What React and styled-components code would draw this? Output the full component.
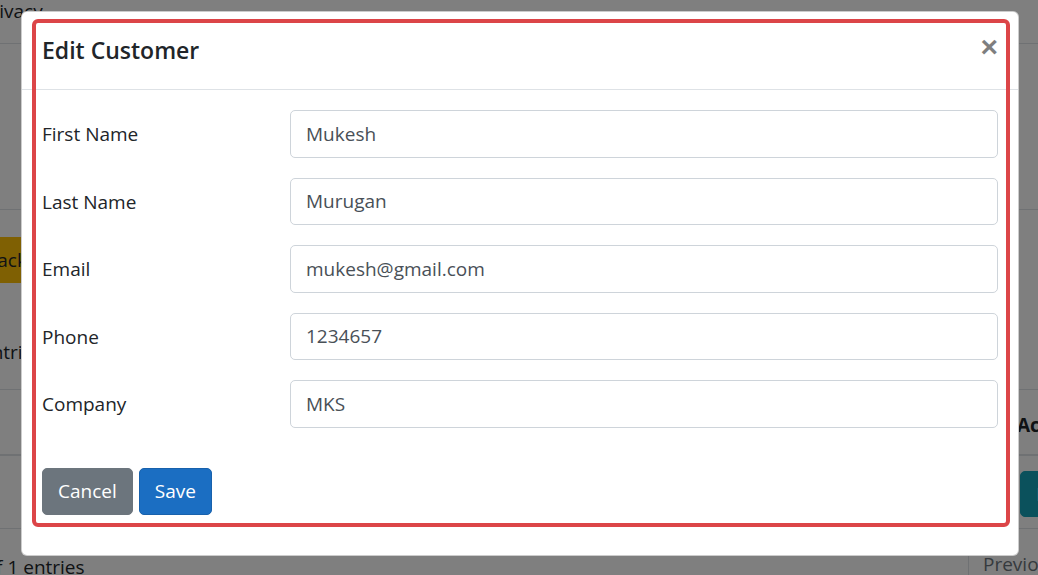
import React from "react";
import styled, { createGlobalStyle } from "styled-components";

const GlobalStyle = createGlobalStyle`
  html, body {
    margin: 0;
    padding: 0;
  }
  body {
    font-family: "Open Sans", "Noto Sans", "Liberation Sans", sans-serif;
    color: #212529;
  }
`;

const Page = styled.div`
  position: relative;
  width: 1038px;
  height: 575px;
  overflow: hidden;
  background: #fff;
  font-size: 19px;
  line-height: 30px;
`;

/* page behind the dialog */

const Behind = styled.div`
  display: flex;
  flex-direction: column;
  width: 1200px;
`;

const NavBar = styled.div`
  height: 43px;
  border-bottom: 1px solid #dee2e6;
  display: flex;
  align-items: flex-start;
`;

const NavLink = styled.span`
  margin-left: -20px;
  margin-top: -4px;
  color: #212529;
`;

const Hero = styled.div`
  height: 165px;
  border-bottom: 1px solid #dee2e6;
`;

const Toolbar = styled.div`
  padding-top: 27px;
  height: 73px;
`;

const WarningButton = styled.span`
  display: inline-block;
  margin-left: -31px;
  padding: 7px 15px;
  background: #ffc107;
  border: 1px solid #ffc107;
  border-radius: 5px;
  color: #212529;
`;

const LengthRow = styled.div`
  height: 79px;
  display: flex;
  align-items: center;
  padding-top: 4px;
  box-sizing: border-box;
`;

const Cropped = styled.span`
  margin-left: ${(p) => p.$shift}px;
  white-space: nowrap;
`;

const TableRow = styled.div`
  display: grid;
  grid-template-columns: 1005px 195px;
  height: ${(p) => p.$h}px;
  border-top: ${(p) => p.$top}px solid #dee2e6;
  align-items: center;
`;

const HeadCell = styled.div`
  font-weight: 700;
  padding: 0 12px;
  padding-top: 6px;
`;

const Cell = styled.div`
  padding: 4px 15px 0;
`;

const InfoButton = styled.span`
  display: inline-block;
  padding: 7px 15px;
  background: #17a2b8;
  border: 1px solid #17a2b8;
  border-radius: 5px;
  color: #fff;
`;

const FooterRow = styled.div`
  border-top: 1px solid #dee2e6;
  display: flex;
  justify-content: space-between;
  height: 60px;
`;

const Info = styled.div`
  padding-top: 23px;
`;

const Pager = styled.div`
  width: 217px;
  border-left: 1px solid #dee2e6;
  padding: 20px 0 0 14px;
  color: #6c757d;
`;

const Backdrop = styled.div`
  position: absolute;
  inset: 0;
  background: rgba(0, 0, 0, 0.5);
`;

/* dialog */

const ModalLayer = styled.div`
  position: absolute;
  inset: 0;
  display: flex;
  justify-content: flex-start;
  align-items: flex-start;
  padding: 11px 0 0 21px;
`;

const ModalContent = styled.div`
  width: 998px;
  box-sizing: border-box;
  background: #fff;
  border: 1px solid rgba(0, 0, 0, 0.2);
  border-radius: 6px;
  display: flex;
  flex-direction: column;
`;

const ModalHeader = styled.div`
  display: flex;
  align-items: flex-start;
  justify-content: space-between;
  padding: 20px;
  border-bottom: 1px solid #dee2e6;
`;

const Title = styled.h5`
  margin: 0;
  font-size: 23px;
  line-height: 37px;
  font-weight: 600;
  color: #212529;
`;

const CloseButton = styled.button`
  margin: -20px -20px -20px auto;
  padding: 20px;
  background: transparent;
  border: 0;
  font-family: "Liberation Sans", Arial, sans-serif;
  font-size: 30px;
  font-weight: 700;
  line-height: 1;
  color: #000;
  opacity: 0.5;
  cursor: pointer;
`;

const ModalBody = styled.form`
  padding: 20px 20px 40px;
  display: flex;
  flex-direction: column;
  gap: 20px;
`;

const FormRow = styled.div`
  display: flex;
  align-items: flex-start;
`;

const Label = styled.label`
  width: 248px;
  flex-shrink: 0;
  padding-top: 9px;
  line-height: 30px;
  color: #212529;
`;

const Input = styled.input`
  flex: 1;
  height: 47.5px;
  box-sizing: border-box;
  padding: 7px 15px;
  font-family: inherit;
  font-size: 19px;
  line-height: 30px;
  color: #495057;
  background: #fff;
  border: 1px solid #ced4da;
  border-radius: 5px;
  outline: none;
`;

const Actions = styled.div`
  display: flex;
  gap: 6px;
  margin-top: 20px;
`;

const Button = styled.button`
  height: 47.5px;
  padding: 7px 15px;
  font-family: inherit;
  font-size: 19px;
  line-height: 30px;
  color: #fff;
  border-radius: 5px;
  border: 1px solid ${(p) => (p.$primary ? "#1861ac" : "#6c757d")};
  background: ${(p) => (p.$primary ? "#1b6ec2" : "#6c757d")};
  cursor: pointer;
`;

const Highlight = styled.div`
  position: absolute;
  left: 32px;
  top: 19px;
  width: 978px;
  height: 508px;
  box-sizing: border-box;
  border: 4px solid #dc4548;
  border-radius: 6px;
  pointer-events: none;
`;

const fields = [
    {id: "firstName", label: "First Name", value: "Mukesh"},
    {id: "lastName", label: "Last Name", value: "Murugan"},
    {id: "email", label: "Email", value: "mukesh@gmail.com"},
    {id: "phone", label: "Phone", value: "1234657"},
    {id: "company", label: "Company", value: "MKS"},
];

const App = () => {
    return (
        <>
            <GlobalStyle/>
            <Page>
                <Behind>
                    <NavBar>
                        <NavLink>Privacy</NavLink>
                    </NavBar>
                    <Hero/>
                    <Toolbar>
                        <WarningButton>Back</WarningButton>
                    </Toolbar>
                    <LengthRow>
                        <Cropped $shift={-19}>entries</Cropped>
                    </LengthRow>
                    <TableRow $h={64} $top={1}>
                        <HeadCell/>
                        <HeadCell>Actions</HeadCell>
                    </TableRow>
                    <TableRow $h={72} $top={2}>
                        <Cell/>
                        <Cell>
                            <InfoButton>Edit</InfoButton>
                        </Cell>
                    </TableRow>
                    <FooterRow>
                        <Info>
                            <Cropped $shift={-150}>Showing 1 to 1 of 1 entries</Cropped>
                        </Info>
                        <Pager>Previous</Pager>
                    </FooterRow>
                </Behind>
                <Backdrop/>
                <ModalLayer>
                    <ModalContent>
                        <ModalHeader>
                            <Title>Edit Customer</Title>
                            <CloseButton type="button" aria-label="Close">×</CloseButton>
                        </ModalHeader>
                        <ModalBody onSubmit={(e) => e.preventDefault()}>
                            {fields.map((f) => (
                                <FormRow key={f.id}>
                                    <Label htmlFor={f.id}>{f.label}</Label>
                                    <Input id={f.id} defaultValue={f.value}/>
                                </FormRow>
                            ))}
                            <Actions>
                                <Button type="button">Cancel</Button>
                                <Button type="submit" $primary>Save</Button>
                            </Actions>
                        </ModalBody>
                    </ModalContent>
                </ModalLayer>
                <Highlight/>
            </Page>
        </>
    );
};

export default App;
